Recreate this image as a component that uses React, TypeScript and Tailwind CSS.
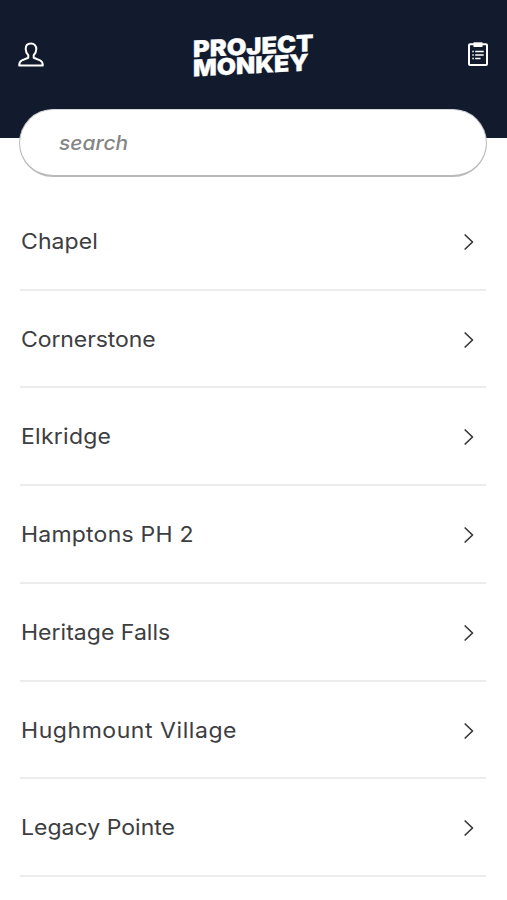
import React from "react";

const rows = [
  { name: "Chapel", row: "h-[98px]", text: "tracking-[0.07px]" },
  { name: "Cornerstone", row: "h-[97px]", text: "tracking-[-0.09px]" },
  { name: "Elkridge", row: "h-[98px]", text: "tracking-[0.24px]" },
  { name: "Hamptons PH 2", row: "h-[98px]", text: "tracking-[0.2px]" },
  { name: "Heritage Falls", row: "h-[98px]", text: "tracking-[0.02px]" },
  { name: "Hughmount Village", row: "h-[97px]", text: "tracking-[0.52px]" },
  { name: "Legacy Pointe", row: "h-[98px]", text: "tracking-[0.02px]" },
];

function Logo() {
  return (
    <svg width="140" height="70" viewBox="-5 -10 140 70" fill="#fff" stroke="#fff" strokeWidth="0.3" className="overflow-visible font-['Inter',sans-serif] font-black">
      <g transform="translate(6 0) skewY(-2.9)">
        <text x="-1" y="28.3" fontSize="23" textLength="120.5" lengthAdjust="spacingAndGlyphs">PROJECT</text>
        <text x="-1" y="47.4" fontSize="23" textLength="115.5" lengthAdjust="spacingAndGlyphs">MONKEY</text>
      </g>
    </svg>
  );
}

function UserIcon() {
  return (
    <svg width="26" height="26" viewBox="0 0 26 26" fill="none" stroke="#fff" strokeWidth="2" strokeLinejoin="round">
      <path d="M13 1.6C9.6 1.6 7.7 3.9 7.7 7C7.7 9.6 8.8 11.6 10.3 13.2V15.8L3.9 18.4C2 19.2 1.2 20.4 1.2 23.6H24.8C24.8 20.4 24 19.2 22.1 18.4L15.7 15.8V13.2C17.2 11.6 18.3 9.6 18.3 7C18.3 3.9 16.4 1.6 13 1.6Z" />
    </svg>
  );
}

function ClipboardIcon() {
  return (
    <svg width="20" height="24" viewBox="0 0 20 24" fill="none" stroke="#fff">
      <rect x="1" y="2.3" width="18" height="20.7" rx="1" strokeWidth="2" />
      <path d="M5.5 0.3H14.5V5H5.5Z" fill="#fff" stroke="none" />
      <path d="M4.3 9.5H5.8M7.2 9.5H15.7M4.3 13H5.8M7.2 13H15.7M4.3 16.5H5.8M7.2 16.5H12.5" strokeWidth="1.4" />
    </svg>
  );
}

export default function App() {
  return (
    <div className="h-[900px] w-full overflow-hidden bg-white font-['Inter',sans-serif]">
      <header className="flex h-[138px] items-start justify-between bg-[#121b2e] pl-[18px] pr-[19px]">
        <div className="mt-[42px] w-[130px]"><UserIcon /></div>
        <div className="mt-[19px]"><Logo /></div>
        <div className="mt-[42px] flex w-[130px] justify-end"><ClipboardIcon /></div>
      </header>
      <div className="relative mx-[19px] -mt-[29px] mr-5 flex h-[68px] items-center rounded-full border border-b-2 border-[#b9b9b9] border-t-[#d5d6d9] bg-white pl-[39px] pt-[2px]">
        <input
          placeholder="search"
          className="w-60 origin-left scale-x-[1.07] bg-transparent text-[19.5px] font-medium italic tracking-[0.1px] outline-none placeholder:text-[#858585]"
        />
      </div>
      <ul className="mx-5 mt-4 mr-[21px]">
        {rows.map((r) => (
          <li key={r.name} className={`flex items-center justify-between border-b-2 border-[#ececec] pl-px pr-3 ${r.row}`}>
            <span className={`mt-px origin-left scale-x-[1.07] whitespace-nowrap text-[21.5px] text-[#3d3e42] ${r.text}`}>{r.name}</span>
            <svg width="10" height="16" viewBox="0 0 10 16" fill="none" stroke="#37383c" strokeWidth="1.7" strokeLinecap="round" strokeLinejoin="round" className="mt-[2px]">
              <path d="M1.2 1L8.5 8L1.2 15" />
            </svg>
          </li>
        ))}
      </ul>
    </div>
  );
}
